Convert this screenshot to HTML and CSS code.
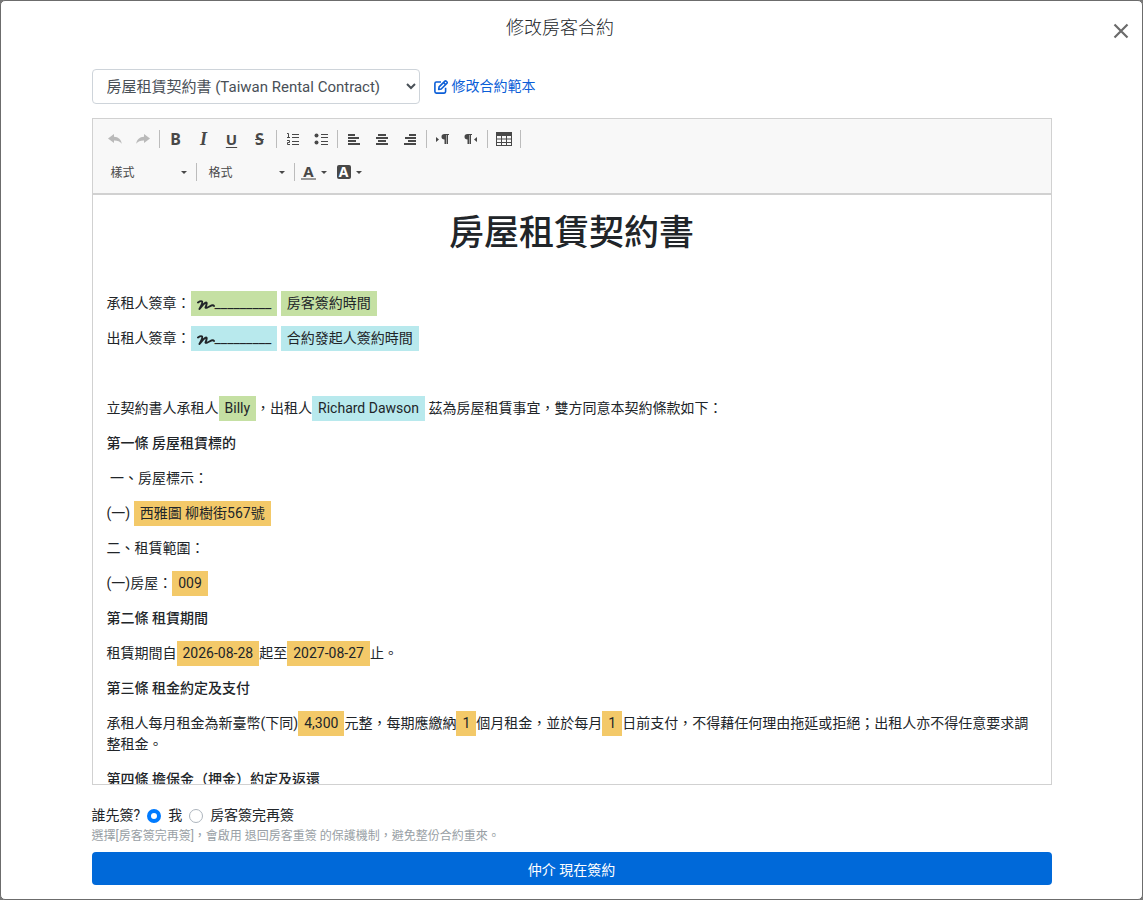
FILE: index.html
```
<!DOCTYPE html>
<html lang="zh-Hant">
<head>
  <meta charset="utf-8">
  <title>修改房客合約</title>
  <link rel="stylesheet" href="styles.css">
</head>
<body>
  <div class="modal">
    <div class="modal-header">
      <h5 class="modal-title">修改房客合約</h5>
      <button type="button" class="close" aria-label="Close">
        <svg width="16" height="16" viewBox="0 0 16 16"><path d="M1.5 1.5l13 13M14.5 1.5l-13 13" stroke="#6b6b6b" stroke-width="2.2" fill="none"/></svg>
      </button>
    </div>

    <form class="modal-body">
      <div class="template-row">
        <select class="template-select" aria-label="合約範本">
          <option>房屋租賃契約書 (Taiwan Rental Contract)</option>
        </select>
        <a href="#" class="edit-link">
          <svg width="14" height="14" viewBox="0 0 14 14" fill="none" stroke="currentColor" stroke-width="1.6" stroke-linejoin="round"><path d="M7 2H2.4Q.9 2 .9 3.5v8.100Q.9 13.100 2.400 13.100h7.700q1.500 0 1.500-1.500V7.800"/><path d="M4.700 9.400l.4-2.500 5.800-5.800q.6-.5 1.200 0l.9.9q.5.600 0 1.200L7.200 9z"/><path d="M9.500 2.500l2.100 2.100"/></svg>
          修改合約範本
        </a>
      </div>

      <div class="editor">
        <div class="toolbar">
          <div class="tool-row">
            <button type="button" class="tool disabled" aria-label="復原"><svg width="16" height="16" viewBox="0 0 16 16"><path d="M1 7.500L7 3v2.700c4.500.2 7 2.600 7.800 7C12.800 10.200 10.500 9.300 7 9.400V12z"/></svg></button>
            <button type="button" class="tool disabled" aria-label="重做"><svg width="16" height="16" viewBox="0 0 16 16"><path d="M15 7.500L9 3v2.700c-4.500.2-7 2.600-7.800 7C3.200 10.200 5.500 9.300 9 9.400V12z"/></svg></button>
            <span class="sep"></span>
            <button type="button" class="tool bold">B</button>
            <button type="button" class="tool italic">I</button>
            <button type="button" class="tool underline">U</button>
            <button type="button" class="tool strike">S</button>
            <span class="sep"></span>
            <button type="button" class="tool" aria-label="編號清單"><svg width="16" height="16" viewBox="0 0 16 16" fill="none" stroke="#484848"><path d="M2 3.500h1.500V8M2 7.500h3M2 10.500h2.500v2H2.500v2H5M7 4.500h7M7 7.500h7M7 11.500h7M7 14.500h7" transform="translate(0 -1)"/></svg></button>
            <button type="button" class="tool" aria-label="項目清單"><svg width="16" height="16" viewBox="0 0 16 16"><circle cx="3.500" cy="4.500" r="2"/><circle cx="3.500" cy="11.500" r="2"/><path d="M8 3h7v1H8zM8 6h7v1H8zM8 10h7v1H8zM8 13h7v1H8z"/></svg></button>
            <span class="sep"></span>
            <button type="button" class="tool" aria-label="靠左"><svg width="16" height="16" viewBox="0 0 16 16"><path d="M2 3h7v2H2zM2 6h11v2H2zM2 9h8v2H2zM2 12h12v2H2z"/></svg></button>
            <button type="button" class="tool" aria-label="置中"><svg width="16" height="16" viewBox="0 0 16 16"><path d="M4 3h8v2H4zM2 6h12v2H2zM4 9h8v2H4zM2 12h12v2H2z"/></svg></button>
            <button type="button" class="tool" aria-label="靠右"><svg width="16" height="16" viewBox="0 0 16 16"><path d="M7 3h7v2H7zM3 6h11v2H3zM6 9h8v2H6zM2 12h12v2H2z"/></svg></button>
            <span class="sep"></span>
            <button type="button" class="tool" aria-label="由左至右"><svg width="16" height="16" viewBox="0 0 16 16"><path d="M1 6l3 2.500L1 11zM9.500 3H14v1h-1v9h-1.500V4H11v9H9.500V8.500Q6.500 8.300 6.500 5.700T9.500 3z"/></svg></button>
            <button type="button" class="tool" aria-label="由右至左"><svg width="16" height="16" viewBox="0 0 16 16"><path d="M14 6l-3 2.500 3 2.500zM4.500 3H9v1H8v9H6.500V4H6v9H4.500V8.500Q1.500 8.300 1.500 5.700T4.500 3z"/></svg></button>
            <span class="sep"></span>
            <button type="button" class="tool" aria-label="表格"><svg width="16" height="16" viewBox="0 0 16 16"><path d="M0 1h16v14H0zM1 5v2.500h4V5zM6 5v2.500h4V5zM11 5v2.500h4V5zM1 8.500V11h4V8.500zM6 8.500V11h4V8.500zM11 8.500V11h4V8.500zM1 12v2h4v-2zM6 12v2h4v-2zM11 12v2h4v-2z" fill-rule="evenodd"/></svg></button>
            <span class="sep"></span>
          </div>
          <div class="tool-row">
            <button type="button" class="combo">樣式<i class="caret"></i></button>
            <span class="sep"></span>
            <button type="button" class="combo">格式<i class="caret"></i></button>
            <span class="sep"></span>
            <button type="button" class="color-tool"><span class="text-color">A</span><i class="caret"></i></button>
            <button type="button" class="color-tool"><span class="bg-color">A</span><i class="caret"></i></button>
          </div>
        </div>

        <div class="contents">
          <h1>房屋租賃契約書</h1>
          <p>&nbsp;</p>
          <p>承租人簽章：<span class="field green"><svg class="sign" width="18" height="12" viewBox="0 0 18 12"><path d="M1 3.500Q4 1.500 5 2.500T2.500 10Q7.500 3.500 9 3.500T8.500 8.500Q9 9.500 12.500 7.500T17 7"/></svg>_________</span> <span class="field green">房客簽約時間</span></p>
          <p>出租人簽章：<span class="field blue"><svg class="sign" width="18" height="12" viewBox="0 0 18 12"><path d="M1 3.500Q4 1.500 5 2.500T2.500 10Q7.500 3.500 9 3.500T8.500 8.500Q9 9.500 12.500 7.500T17 7"/></svg>_________</span> <span class="field blue">合約發起人簽約時間</span></p>
          <p>&nbsp;</p>
          <p>立契約書人承租人<span class="field green">Billy</span>，出租人<span class="field blue">Richard Dawson</span> 茲為房屋租賃事宜，雙方同意本契約條款如下：</p>
          <p><strong>第一條 房屋租賃標的</strong></p>
          <p>&nbsp;一、房屋標示：</p>
          <p>(一) <span class="field orange">西雅圖 柳樹街567號</span></p>
          <p>二、租賃範圍：</p>
          <p>(一)房屋：<span class="field orange">009</span></p>
          <p><strong>第二條 租賃期間</strong></p>
          <p>租賃期間自<span class="field orange">2026-08-28</span>起至<span class="field orange">2027-08-27</span>止。</p>
          <p><strong>第三條 租金約定及支付</strong></p>
          <p>承租人每月租金為新臺幣(下同)<span class="field orange">4,300</span>元整，每期應繳納<span class="field orange">1</span>個月租金，並於每月<span class="field orange">1</span>日前支付，不得藉任何理由拖延或拒絕；出租人亦不得任意要求調整租金。</p>
          <p><strong>第四條 擔保金（押金）約定及返還</strong></p>
        </div>
      </div>

      <div class="sign-order">
        <span>誰先簽?</span>
        <input type="radio" name="order" id="orderMe" checked>
        <label for="orderMe">我</label>
        <input type="radio" name="order" id="orderTenant">
        <label for="orderTenant">房客簽完再簽</label>
      </div>
      <p class="hint">選擇[房客簽完再簽]，會啟用 退回房客重簽 的保護機制，避免整份合約重來。</p>
      <button type="submit" class="btn-primary">仲介 現在簽約</button>
    </form>
  </div>
</body>
</html>
```
FILE: styles.css
```
* {
  box-sizing: border-box;
}
body {
  margin: 0;
  background: #777;
  color: #212529;
  font-family: Roboto, "Noto Sans CJK TC", sans-serif;
  font-size: 14px;
  line-height: 21px;
}
button, select, input {
  font-family: inherit;
}
.modal {
  display: flex;
  flex-direction: column;
  height: 100vh;
  border: 1px solid #6c6c6c;
  border-radius: 5px;
  background: #fff;
}
.modal-header {
  display: flex;
  align-items: center;
  padding: 14px 13px 0 0;
}
.modal-title {
  flex: 1;
  margin: 0;
  padding-left: 6px;
  font-size: 18px;
  font-weight: 300;
  line-height: 26px;
  text-align: center;
}
.close {
  display: flex;
  margin-top: 6px;
  padding: 0;
  border: 0;
  background: none;
}
.modal-body {
  display: flex;
  flex: 1;
  flex-direction: column;
  width: 100%;
  max-width: 960px;
  min-height: 0;
  margin: 0 auto;
  padding: 28px 0 14px;
}
.template-row {
  display: flex;
  align-items: center;
  gap: 14px;
  margin-bottom: 14px;
}
.template-select {
  width: 328px;
  height: 35px;
  padding: 0 10px;
  border: 1px solid #ced4da;
  border-radius: 4px;
  background: #fff;
  color: #495057;
  font-size: 15px;
}
.edit-link {
  display: flex;
  align-items: center;
  gap: 4px;
  color: #0b5ed7;
  text-decoration: none;
}

/* editor */
.editor {
  display: flex;
  flex: 1;
  flex-direction: column;
  min-height: 0;
  border: 1px solid #d1d1d1;
}
.toolbar {
  padding: 6px 8px 7px;
  border-bottom: 2px solid #d1d1d1;
  background: #f8f8f8;
  font-family: "Noto Sans", "Noto Sans CJK TC", sans-serif;
}
.tool-row {
  display: flex;
  align-items: center;
  height: 28px;
}
.tool-row + .tool-row {
  margin-top: 5px;
}
.tool, .combo, .color-tool {
  display: flex;
  align-items: center;
  justify-content: center;
  height: 28px;
  padding: 0;
  border: 0;
  background: none;
  color: #484848;
}
.tool {
  width: 28px;
  font-size: 16px;
  font-weight: 700;
  fill: #484848;
}
.disabled {
  opacity: 0.35;
}
.italic {
  font-family: "Liberation Serif", serif;
  font-style: italic;
  font-size: 18px;
}
.underline {
  font-size: 15px;
  text-decoration: underline;
  text-underline-offset: 2px;
}
.strike {
  text-decoration: line-through;
}
.sep {
  width: 1px;
  height: 18px;
  margin: 0 2px;
  background: #bcbcbc;
}
.combo {
  justify-content: space-between;
  width: 93px;
  padding: 0 7px 0 10px;
  font-size: 12px;
}
.caret {
  border: 3px solid transparent;
  border-top-color: #484848;
  border-bottom: 0;
}
.color-tool {
  gap: 5px;
  width: 35px;
  font-size: 15px;
  font-weight: 700;
  line-height: 14px;
}
.text-color {
  width: 15px;
  border-bottom: 2px solid #999;
}
.bg-color {
  width: 14px;
  border-radius: 2px;
  background: #484848;
  color: #fff;
  font-size: 14px;
}
.contents {
  flex: 1;
  min-height: 0;
  overflow: hidden;
  padding: 14px;
}
.contents h1 {
  margin: 0 0 7px;
  font-family: "Noto Sans CJK TC", sans-serif;
  font-size: 35px;
  font-weight: 500;
  line-height: 42px;
  text-align: center;
}
.contents p {
  margin: 0 0 14px;
}
.contents strong {
  font-weight: 500;
}
.field {
  display: inline-block;
  margin: -2px 0;
  padding: 2px 6px;
}
.green {
  background: #c5e0a3;
}
.blue {
  background: #b8e9ed;
}
.orange {
  background: #f3c969;
}
.sign {
  vertical-align: -3px;
  fill: none;
  stroke: #212529;
  stroke-width: 2;
  stroke-linecap: round;
  stroke-linejoin: round;
}

/* footer */
.sign-order {
  display: flex;
  align-items: center;
  gap: 7px;
  margin-top: 20px;
}
.sign-order input {
  appearance: none;
  width: 14px;
  height: 14px;
  margin: 0;
  border: 1px solid #adb5bd;
  border-radius: 50%;
  background: #fff;
}
.sign-order input:checked {
  border: 4px solid #007bff;
}
.hint {
  margin: 0 0 6px;
  color: #999fa5;
  font-size: 12px;
  line-height: 20px;
}
.btn-primary {
  height: 33px;
  border: 0;
  border-radius: 4px;
  background: #0069d9;
  color: #fff;
  font-size: 14px;
}
```
